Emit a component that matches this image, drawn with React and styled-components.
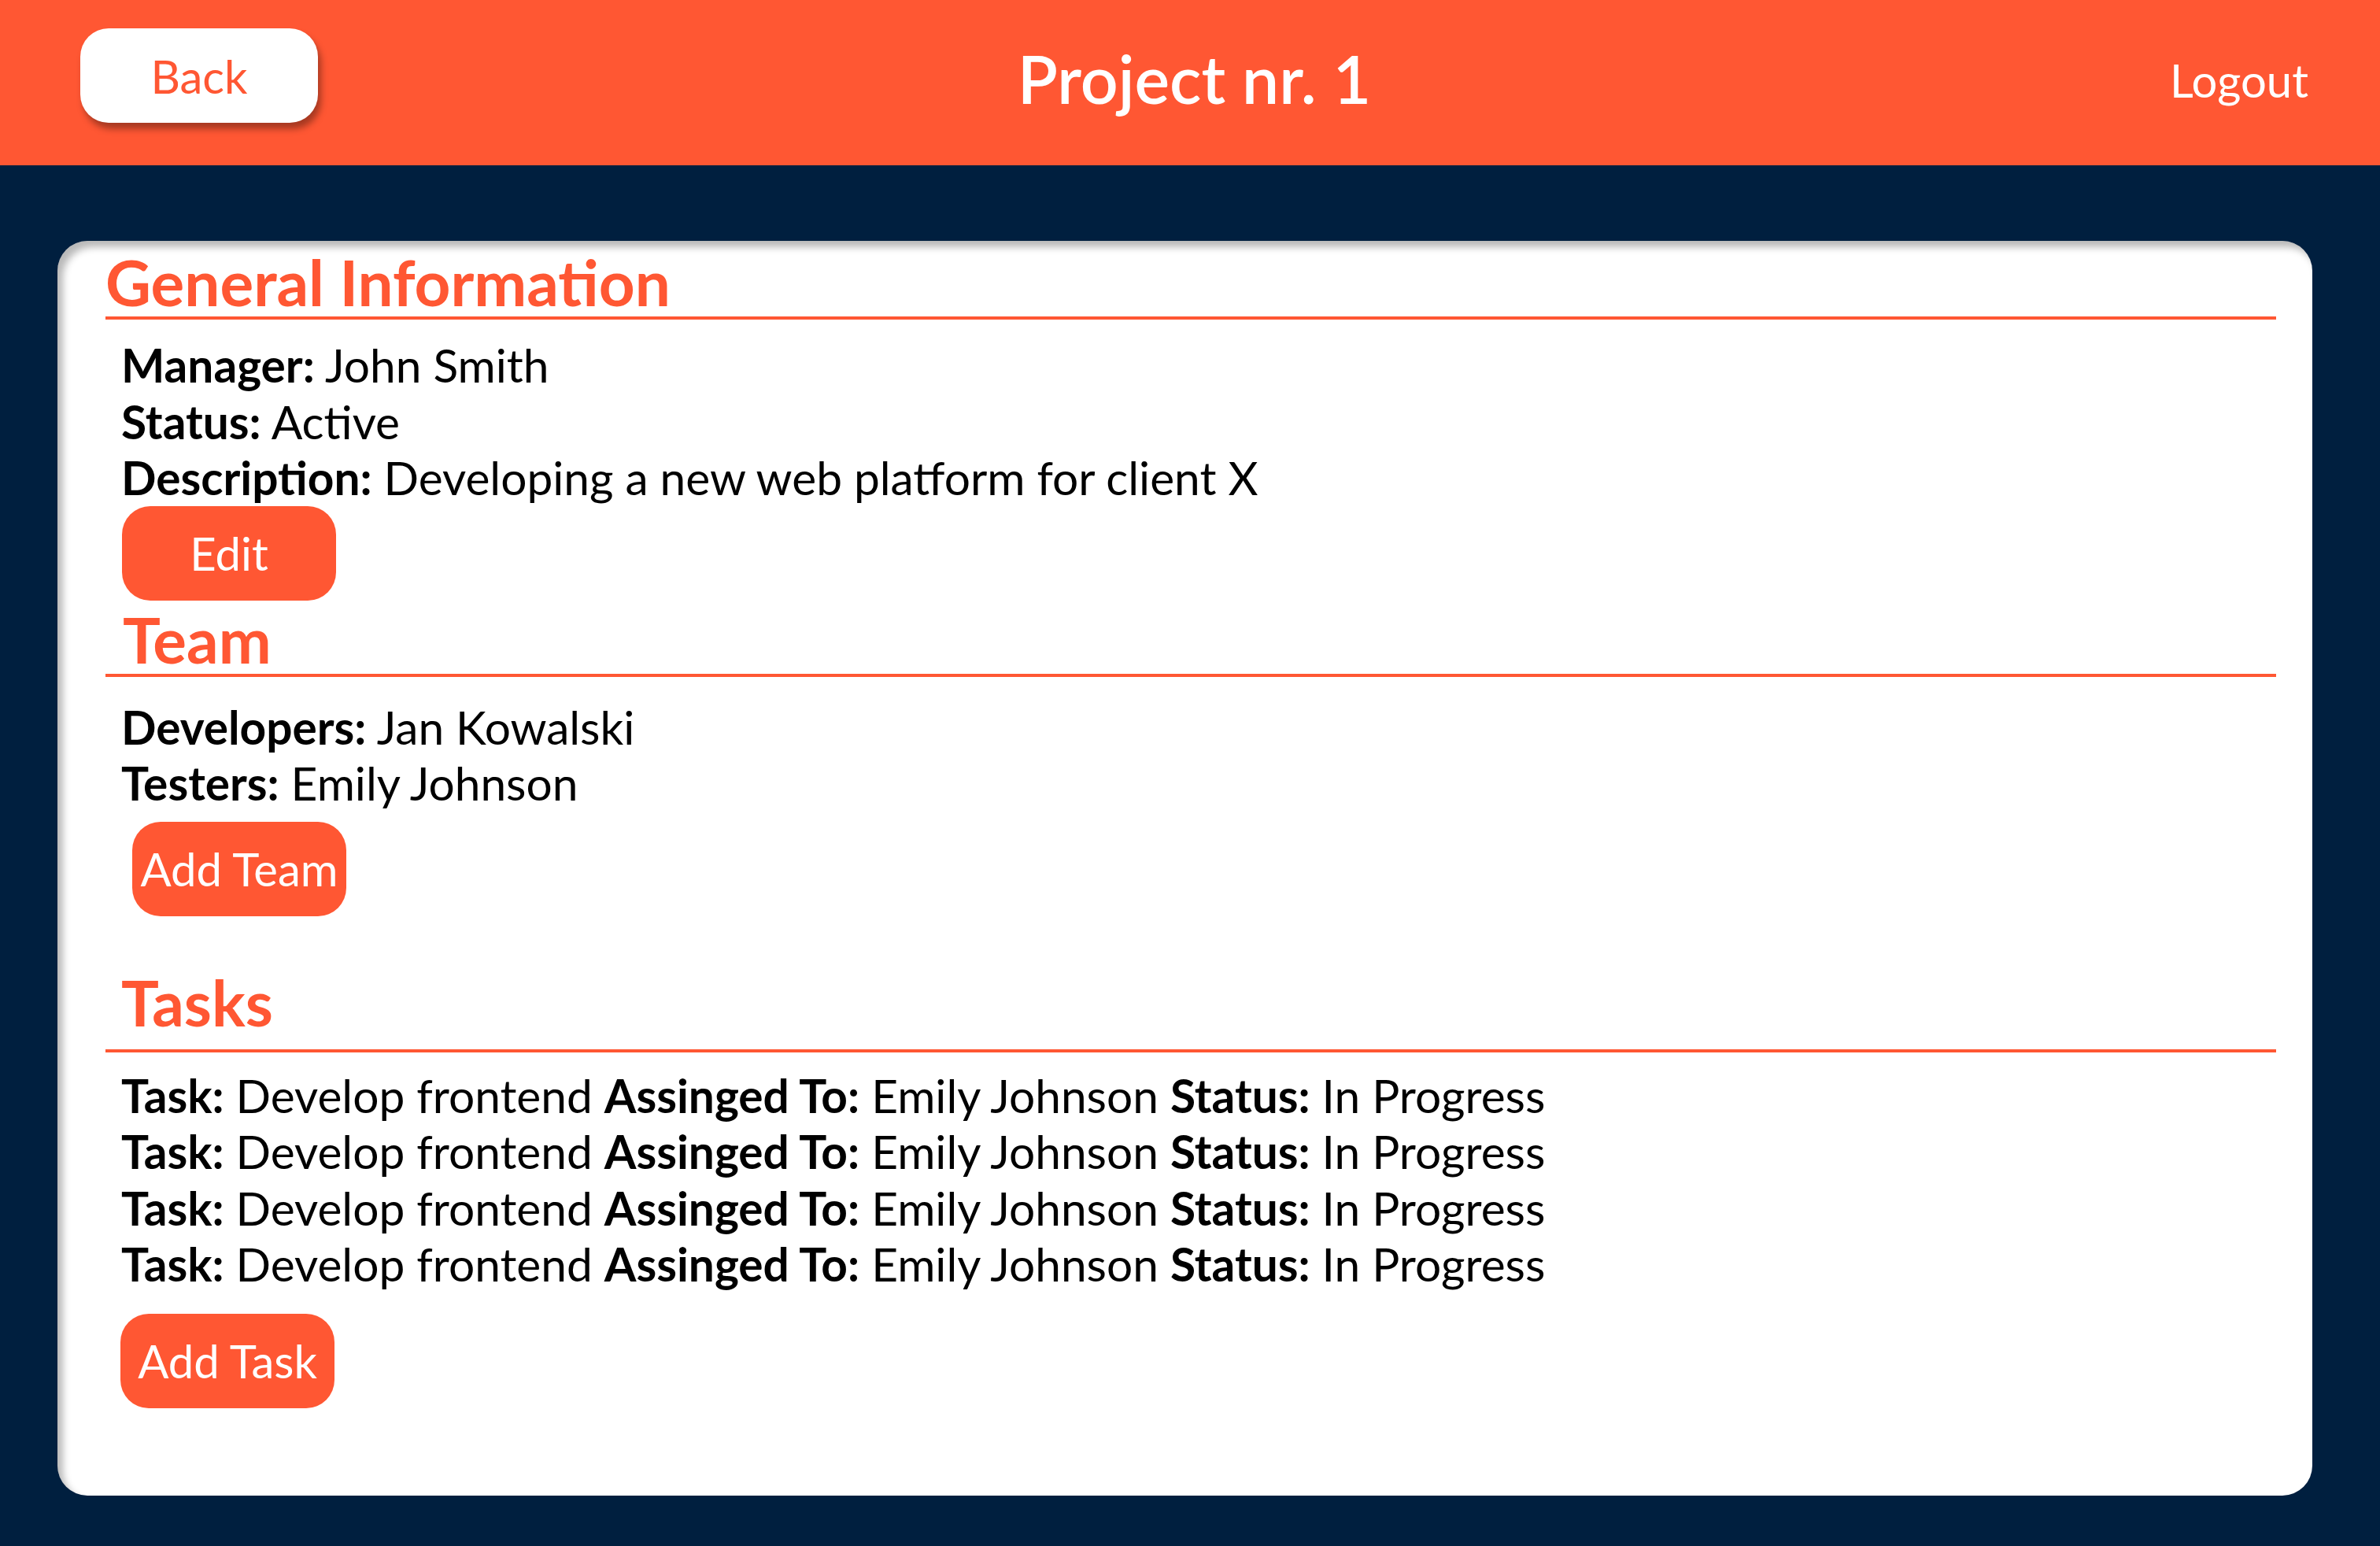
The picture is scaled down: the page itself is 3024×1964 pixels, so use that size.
import React from "react";
import styled, { createGlobalStyle } from "styled-components";

const orange = "#ff5733";
const navy = "#001f3f";

const GlobalStyle = createGlobalStyle`
  * { box-sizing: border-box; }
  body {
    margin: 0;
    background: ${navy};
    font-family: Lato, "Noto Sans", sans-serif;
  }
`;

const Page = styled.div`
  min-height: 1964px;
  background: ${navy};
`;

const Header = styled.header`
  height: 210px;
  background: ${orange};
  display: grid;
  grid-template-columns: 1fr auto 1fr;
  align-items: center;
  padding: 0 91px 0 102px;
`;

const BackButton = styled.button`
  justify-self: start;
  width: 302px;
  height: 120px;
  margin-bottom: 18px;
  border: none;
  border-radius: 36px;
  background: #fff;
  color: ${orange};
  font-family: inherit;
  font-size: 58px;
  box-shadow: 4px 8px 8px rgba(0, 0, 0, 0.35);
  cursor: pointer;
`;

const Title = styled.h1`
  margin: 0 0 12px;
  color: #fff;
  font-size: 84px;
  font-weight: 600;
`;

const LogoutLink = styled.a`
  justify-self: end;
  margin-bottom: 8px;
  color: #fff;
  font-size: 58px;
  cursor: pointer;
`;

const Card = styled.main`
  margin: 96px 86px 0 73px;
  height: 1594px;
  background: #fff;
  border-radius: 38px;
  box-shadow: inset 7px 8px 10px rgba(0, 0, 0, 0.28);
  padding: 8px 46px 0 61px;
`;

const SectionTitle = styled.h2`
  margin: ${(p) => p.$top || 0}px 0 0;
  padding: 0 0 ${(p) => p.$gap || 0}px ${(p) => p.$indent || 0}px;
  border-bottom: 4px solid ${orange};
  color: ${orange};
  font-size: 80px;
  font-weight: 700;
  line-height: 88px;
`;

const Info = styled.div`
  margin-top: ${(p) => p.$top || 0}px;
  padding-left: 20px;
  font-size: 58.6px;
  line-height: 71.5px;
  color: #000;
`;

const Row = styled.div`
  white-space: nowrap;
`;

const Label = styled.b`
  font-weight: 700;
`;

const ActionButton = styled.button`
  display: block;
  width: 272px;
  height: 120px;
  margin: ${(p) => p.$top || 0}px 0 0 ${(p) => p.$left || 0}px;
  padding: 0;
  border: none;
  border-radius: 36px;
  background: ${orange};
  color: #fff;
  font-family: inherit;
  font-size: 58px;
  white-space: nowrap;
  cursor: pointer;
`;

const tasks = [1, 2, 3, 4].map((id) => ({
  id,
  name: "Develop frontend",
  assignee: "Emily Johnson",
  status: "In Progress",
}));

export default function App() {
  return (
    <Page>
      <GlobalStyle />
      <Header>
        <BackButton>Back</BackButton>
        <Title>Project nr. 1</Title>
        <LogoutLink>Logout</LogoutLink>
      </Header>

      <Card>
        <SectionTitle>General Information</SectionTitle>
        <Info $top={22}>
          <Row>
            <Label>Manager:</Label> John Smith
          </Row>
          <Row>
            <Label>Status:</Label> Active
          </Row>
          <Row>
            <Label>Description:</Label> Developing a new web platform for client X
          </Row>
        </Info>
        <ActionButton $top={0} $left={21}>
          Edit
        </ActionButton>

        <SectionTitle $top={5} $indent={22}>
          Team
        </SectionTitle>
        <Info $top={28}>
          <Row>
            <Label>Developers:</Label> Jan Kowalski
          </Row>
          <Row>
            <Label>Testers:</Label> Emily Johnson
          </Row>
        </Info>
        <ActionButton $top={13} $left={34}>
          Add Team
        </ActionButton>

        <SectionTitle $top={65} $indent={20} $gap={16}>
          Tasks
        </SectionTitle>
        <Info $top={19}>
          {tasks.map((t) => (
            <Row key={t.id}>
              <Label>Task:</Label> {t.name} <Label>Assinged To:</Label>{" "}
              {t.assignee} <Label>Status:</Label> {t.status}
            </Row>
          ))}
        </Info>
        <ActionButton $top={27} $left={19}>
          Add Task
        </ActionButton>
      </Card>
    </Page>
  );
}
